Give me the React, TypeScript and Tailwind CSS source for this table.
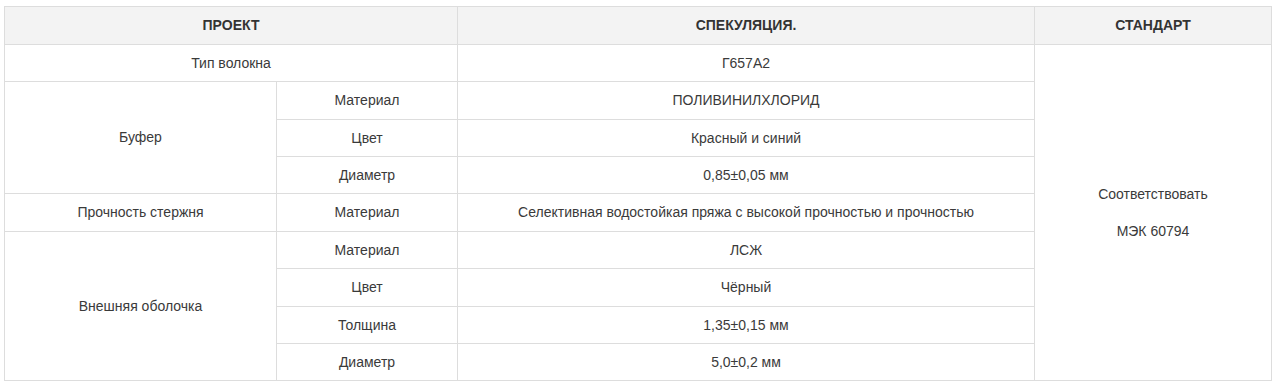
import React from "react";

const cell =
  "flex items-center justify-center border-b border-r border-[#dddddd] text-center";

const head = `${cell} bg-[#f3f3f3] font-bold uppercase text-[#333]`;

const App = () => {
  return (
    <div
      className="min-h-[382px] bg-white pl-[4px] pt-[6px] text-[14px] text-[#3a3a3a]"
      style={{ fontFamily: '"Liberation Sans", Arial, sans-serif' }}
    >
      <div className="grid w-[1268px] grid-cols-[272px_181px_577px_237px] grid-rows-[38px_37px_38px_37px_37px_38px_37px_38px_37px_37px] border-l border-t border-[#dddddd]">
        {/* header */}
        <div className={`${head} col-span-2`}>Проект</div>
        <div className={head}>Спекуляция.</div>
        <div className={head}>Стандарт</div>

        {/* fiber type */}
        <div className={`${cell} col-span-2`}>Тип волокна</div>
        <div className={cell}>Г657А2</div>
        <div className={`${cell} row-span-9 flex-col gap-[21px] leading-[16px]`}>
          <span>Соответствовать</span>
          <span>МЭК 60794</span>
        </div>

        {/* buffer */}
        <div className={`${cell} row-span-3`}>Буфер</div>
        <div className={cell}>Материал</div>
        <div className={cell}>ПОЛИВИНИЛХЛОРИД</div>
        <div className={cell}>Цвет</div>
        <div className={cell}>Красный и синий</div>
        <div className={cell}>Диаметр</div>
        <div className={cell}>0,85±0,05 мм</div>

        {/* strength member */}
        <div className={cell}>Прочность стержня</div>
        <div className={cell}>Материал</div>
        <div className={cell}>Селективная водостойкая пряжа с высокой прочностью и прочностью</div>

        {/* outer sheath */}
        <div className={`${cell} row-span-4`}>Внешняя оболочка</div>
        <div className={cell}>Материал</div>
        <div className={cell}>ЛСЖ</div>
        <div className={cell}>Цвет</div>
        <div className={cell}>Чёрный</div>
        <div className={cell}>Толщина</div>
        <div className={cell}>1,35±0,15 мм</div>
        <div className={cell}>Диаметр</div>
        <div className={cell}>5,0±0,2 мм</div>
      </div>
    </div>
  );
};

export default App;
